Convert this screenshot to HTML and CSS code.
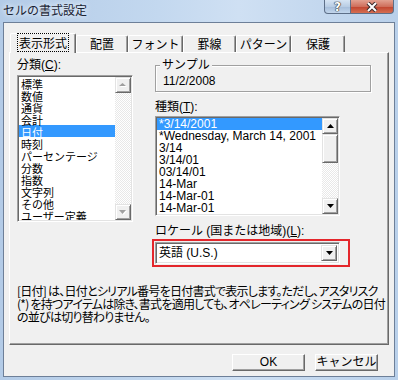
FILE: index.html
```html
<!DOCTYPE html>
<html lang="ja">
<head>
    <meta charset="UTF-8">
    <title>セルの書式設定</title>
    <link rel="stylesheet" href="styles.css">
</head>
<body>
    <div class="window">
        <div class="titlebar">
            <div class="title">セルの書式設定</div>
            <div class="caption-buttons">
                <div class="cap-btn help">?</div>
                <div class="cap-btn close">
                    <svg width="12" height="10" viewBox="0 0 12 10">
                        <path d="M2 1 L10 9 M10 1 L2 9" stroke="#3a2a2a" stroke-width="4"/>
                        <path d="M2 1 L10 9 M10 1 L2 9" stroke="#fff" stroke-width="2"/>
                    </svg>
                </div>
            </div>
        </div>

        <div class="client">
            <div class="tabs">
                <div class="tab active"><span class="focus">表示形式</span></div>
                <div class="tab w52">配置</div>
                <div class="tab w55">フォント</div>
                <div class="tab w53">罫線</div>
                <div class="tab w55">パターン</div>
                <div class="tab w54">保護</div>
            </div>

            <div class="panel">
                <div class="columns">
                    <div class="col-left">
                        <div class="label">分類(<u>C</u>):</div>
                        <div class="listbox category">
                            <ul class="items">
                                <li>標準</li>
                                <li>数値</li>
                                <li>通貨</li>
                                <li>会計</li>
                                <li class="selected">日付</li>
                                <li>時刻</li>
                                <li>パーセンテージ</li>
                                <li>分数</li>
                                <li>指数</li>
                                <li>文字列</li>
                                <li>その他</li>
                                <li>ユーザー定義</li>
                            </ul>
                            <div class="vscroll">
                                <div class="sbtn disabled">
                                    <svg width="8" height="5" viewBox="0 0 8 5"><polygon points="1,4 8,4 4.5,1" fill="#fff"/><polygon points="0,3 7,3 3.5,0" fill="#a0a0a0"/></svg>
                                </div>
                                <div class="track"></div>
                                <div class="sbtn disabled">
                                    <svg width="8" height="5" viewBox="0 0 8 5"><polygon points="1,1 8,1 4.5,5" fill="#fff"/><polygon points="0,0 7,0 3.5,4" fill="#a0a0a0"/></svg>
                                </div>
                            </div>
                        </div>
                    </div>

                    <div class="col-right">
                        <div class="groupbox">
                            <span class="legend">サンプル</span>
                            <div class="sample">11/2/2008</div>
                        </div>

                        <div class="label kind">種類(<u>T</u>):</div>
                        <div class="listbox types">
                            <ul class="items">
                                <li class="selected">*3/14/2001</li>
                                <li>*Wednesday, March 14, 2001</li>
                                <li>3/14</li>
                                <li>3/14/01</li>
                                <li>03/14/01</li>
                                <li>14-Mar</li>
                                <li>14-Mar-01</li>
                                <li>14-Mar-01</li>
                            </ul>
                            <div class="vscroll">
                                <div class="sbtn">
                                    <svg width="7" height="4" viewBox="0 0 7 4"><polygon points="0,4 7,4 3.5,0" fill="#000"/></svg>
                                </div>
                                <div class="thumb"></div>
                                <div class="track"></div>
                                <div class="sbtn">
                                    <svg width="7" height="4" viewBox="0 0 7 4"><polygon points="0,0 7,0 3.5,4" fill="#000"/></svg>
                                </div>
                            </div>
                        </div>

                        <div class="label locale">ロケール (国または地域)(<u>L</u>):</div>
                        <div class="highlight">
                            <div class="combo">
                                <span class="combo-text">英語 (U.S.)</span>
                                <div class="sbtn">
                                    <svg width="7" height="4" viewBox="0 0 7 4"><polygon points="0,0 7,0 3.5,4" fill="#000"/></svg>
                                </div>
                            </div>
                        </div>
                    </div>
                </div>

                <p class="description">[日付] は、日付とシリアル番号を日付書式で表示します。ただし、アスタリスク<br>(*) を持つアイテムは除き、書式を適用しても、オペレーティング システムの日付<br>の並びは切り替わりません。</p>
            </div>

            <div class="buttons">
                <button class="btn ok">OK</button>
                <button class="btn cancel">キャンセル</button>
            </div>
        </div>
    </div>
</body>
</html>
```

FILE: styles.css
```css
body {
    margin: 0;
    padding: 0;
    font-family: "Liberation Sans", "Noto Sans CJK JP", sans-serif;
    font-size: 12px;
    color: #000;
    overflow: hidden;
}
.window {
    width: 398px;
    height: 380px;
    display: flex;
    flex-direction: column;
    background: linear-gradient(90deg, #b3cbe7 0%, #c3d8ef 40%, #cfe0f3 60%, #b9d0ea 100%);
}
.titlebar {
    height: 22px;
    display: flex;
    justify-content: space-between;
    align-items: flex-start;
}
.title {
    padding: 3px 0 0 3px;
    font-family: "Noto Sans CJK JP", sans-serif;
    font-size: 12px;
    line-height: 14px;
    color: #1b2433;
    text-shadow: 0 0 4px #e6f0fb, 0 0 6px #e6f0fb;
}
.caption-buttons {
    display: flex;
    margin-right: 4px;
}
.cap-btn {
    height: 13px;
    display: flex;
    align-items: center;
    justify-content: center;
    border: 1px solid #5d6f88;
    border-top: none;
}
.help {
    width: 25px;
    border-radius: 0 0 0 4px;
    background: linear-gradient(#d6e4f3 0%, #b9cde4 50%, #a4bcd9 51%, #c2d6ec 100%);
    color: #fff;
    font-family: "DejaVu Sans", sans-serif;
    font-weight: bold;
    font-size: 12px;
    text-shadow: 0 0 1px #222, 0 0 1px #222, 0 0 1px #222;
}
.close {
    width: 42px;
    border-left: none;
    border-radius: 0 0 4px 0;
    background: linear-gradient(#e2a191 0%, #cf6f5c 50%, #c0432e 51%, #d56e52 100%);
}

.client {
    flex: 1;
    margin: 0 3px 3px 3px;
    background: #f0f0f0;
    border: 1px solid #6d7f98;
    display: flex;
    flex-direction: column;
}

.tabs {
    display: flex;
    align-items: flex-end;
    height: 20px;
    margin-top: 10px;
    padding-left: 6px;
    line-height: 16px;
    font-family: "Noto Sans CJK JP", sans-serif;
}
.tab {
    height: 17px;
    margin-bottom: 1px;
    box-sizing: border-box;
    border-left: 1px solid #fff;
    border-top: 1px solid #fff;
    border-right: 1px solid #696969;
    box-shadow: inset -1px 0 #a0a0a0;
    border-radius: 2px 2px 0 0;
    text-align: center;
    background: #f0f0f0;
}
.tab.active {
    width: 66px;
    height: 20px;
    margin-bottom: 0;
    padding-top: 1px;
    position: relative;
    z-index: 1;
}
.focus {
    border: 1px dotted #000;
    padding: 0 1px;
}
.w52 { width: 52px; }
.w53 { width: 53px; }
.w54 { width: 54px; }
.w55 { width: 55px; }

.panel {
    margin: -1px 0 0 5px;
    width: 380px;
    height: 293px;
    box-sizing: border-box;
    border-left: 1px solid #fff;
    border-top: 1px solid #fff;
    border-right: 1px solid #696969;
    border-bottom: 1px solid #696969;
    box-shadow: inset -1px -1px #a0a0a0;
    padding: 6px 0 0 7px;
}
.columns {
    display: flex;
    gap: 22px;
}
.label {
    line-height: 12px;
    height: 12px;
}
.label u {
    text-underline-offset: 1px;
}

.listbox {
    margin-top: 4px;
    display: flex;
    box-sizing: border-box;
    background: #fff;
    border: 1px solid;
    border-color: #a0a0a0 #fff #fff #a0a0a0;
    box-shadow: inset 1px 1px #696969, inset -1px -1px #e3e3e3;
    padding: 1px;
}
.category {
    width: 116px;
    height: 147px;
    font-family: "Noto Sans CJK JP", sans-serif;
    font-size: 11px;
}
.category .items li {
    height: 11px;
    padding-top: 1px;
}
.types {
    margin-top: 3px;
    width: 185px;
    height: 100px;
}
.items {
    list-style: none;
    margin: 0;
    padding: 0;
    flex: 1;
    overflow: hidden;
}
.items li {
    height: 12px;
    line-height: 12px;
    padding-left: 2px;
    white-space: nowrap;
}
.items li.selected {
    background: #3399ff;
    color: #fff;
}

.vscroll {
    width: 16px;
    display: flex;
    flex-direction: column;
}
.sbtn {
    width: 16px;
    height: 16px;
    flex: none;
    box-sizing: border-box;
    background: #f0f0f0;
    border: 1px solid;
    border-color: #e3e3e3 #696969 #696969 #e3e3e3;
    box-shadow: inset 1px 1px #fff, inset -1px -1px #a0a0a0;
    display: flex;
    align-items: center;
    justify-content: center;
}
.sbtn svg {
    display: block;
}
.track {
    flex: 1;
    background-color: #f7f7f7;
    background-image: conic-gradient(#fff 25%, #e8e8e8 0 50%, #fff 0 75%, #e8e8e8 0);
    background-size: 2px 2px;
}
.thumb {
    height: 29px;
    flex: none;
    box-sizing: border-box;
    background: #f0f0f0;
    border: 1px solid;
    border-color: #e3e3e3 #696969 #696969 #e3e3e3;
    box-shadow: inset 1px 1px #fff, inset -1px -1px #a0a0a0;
}

.col-right {
    padding-top: 6px;
}
.groupbox {
    position: relative;
    width: 216px;
    height: 27px;
    box-sizing: border-box;
    border: 1px solid #a0a0a0;
    box-shadow: inset 1px 1px #fff, 1px 1px #fff;
}
.legend {
    position: absolute;
    top: -7px;
    left: 4px;
    padding: 0 2px;
    line-height: 12px;
    background: #f0f0f0;
}
.sample {
    padding: 9px 0 0 7px;
    line-height: 12px;
}
.label.kind {
    margin-top: 9px;
}
.label.locale {
    margin-top: 9px;
}
.highlight {
    margin: 2px 0 0 -3px;
    width: 198px;
    box-sizing: border-box;
    border: 2px solid #e4262b;
    padding: 1px;
}
.combo {
    width: 185px;
    height: 22px;
    box-sizing: border-box;
    background: #fff;
    border: 1px solid;
    border-color: #a0a0a0 #fff #fff #a0a0a0;
    box-shadow: inset 1px 1px #696969, inset -1px -1px #e3e3e3;
    padding: 2px;
    display: flex;
    align-items: center;
    justify-content: space-between;
}
.combo-text {
    padding-left: 1px;
    line-height: 14px;
}

.description {
    margin: 17px 0 0 0;
    line-height: 13px;
    font-family: "Noto Sans CJK JP", sans-serif;
    font-feature-settings: "palt";
    letter-spacing: -0.75px;
    white-space: nowrap;
}

.buttons {
    display: flex;
    justify-content: flex-end;
    gap: 10px;
    margin: 9px 16px 0 0;
}
.btn {
    height: 17px;
    box-sizing: border-box;
    padding: 0;
    font-family: "Liberation Sans", "Noto Sans CJK JP", sans-serif;
    font-size: 12px;
    line-height: 13px;
    color: #000;
    background: #f0f0f0;
    border: 1px solid;
    border-color: #fff #696969 #696969 #fff;
    box-shadow: inset -1px -1px #a0a0a0;
}
.ok {
    width: 73px;
}
.cancel {
    width: 63px;
}
```
